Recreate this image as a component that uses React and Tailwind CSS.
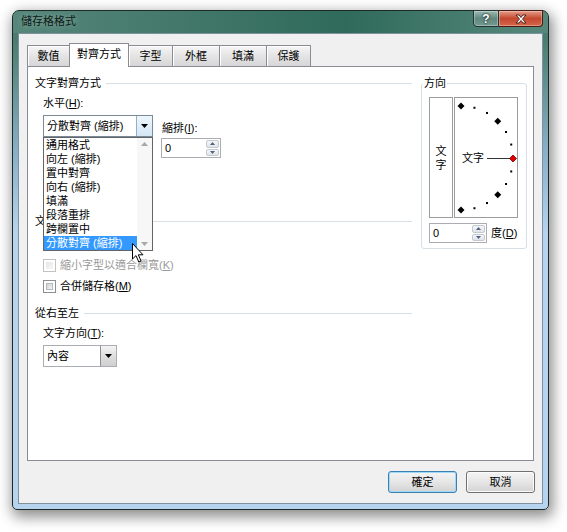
import React from "react";

const U = ({ children }) => (
  <span className="underline underline-offset-[1px]">{children}</span>
);

function DownArrow() {
  return (
    <svg width="7" height="4" viewBox="0 0 7 4">
      <path d="M0 0H7L3.5 4Z" fill="#000" />
    </svg>
  );
}

function SpinButtons() {
  return (
    <div className="w-[15px] flex flex-col gap-[1px] p-[1px] bg-white">
      <div className="flex-1 flex items-center justify-center rounded-[2px] border border-[#c3c9d1] bg-linear-to-b from-[#f6f6f6] to-[#e2e4e8]">
        <svg width="5" height="3" viewBox="0 0 5 3">
          <path d="M0 3H5L2.5 0Z" fill="#4d6185" />
        </svg>
      </div>
      <div className="flex-1 flex items-center justify-center rounded-[2px] border border-[#c3c9d1] bg-linear-to-b from-[#f6f6f6] to-[#e2e4e8]">
        <svg width="5" height="3" viewBox="0 0 5 3">
          <path d="M0 0H5L2.5 3Z" fill="#4d6185" />
        </svg>
      </div>
    </div>
  );
}

function GroupHeader({ title }) {
  return (
    <div className="flex items-center gap-[5px] h-[14px]">
      <span className="leading-[14px] whitespace-nowrap">{title}</span>
      <div className="flex-1 h-px bg-[#d5dfe5]" />
    </div>
  );
}

function Checkbox({ disabled }) {
  return (
    <div
      className={
        disabled
          ? "w-[13px] h-[13px] border border-[#c2c2c2] bg-white p-[2px]"
          : "w-[13px] h-[13px] border border-[#8e8f8f] bg-white p-[2px]"
      }
    >
      <div
        className={
          disabled
            ? "w-full h-full bg-linear-to-br from-[#e6e6e6] to-[#f8f8f8]"
            : "w-full h-full border border-[#b5b8bd] bg-linear-to-br from-[#cfd2d6] to-[#f4f4f4]"
        }
      />
    </div>
  );
}

const listItems = [
  "通用格式",
  "向左 (縮排)",
  "置中對齊",
  "向右 (縮排)",
  "填滿",
  "段落重排",
  "跨欄置中",
  "分散對齊 (縮排)",
];

function Dial() {
  const cx = 6;
  const cy = 60;
  const r = 52;
  const pt = (deg) => {
    const a = (deg * Math.PI) / 180;
    return [cx + r * Math.cos(a), cy - r * Math.sin(a)];
  };
  const diamonds = [90, 45, -45, -90];
  const dots = [75, 60, 30, 15, -15, -30, -60, -75];
  const dpath = ([x, y], s) =>
    `M${x} ${y - s}L${x + s} ${y}L${x} ${y + s}L${x - s} ${y}Z`;
  return (
    <svg width="62" height="119" viewBox="0 0 62 119">
      {dots.map((d) => {
        const [x, y] = pt(d);
        return <rect key={d} x={x - 1} y={y - 1} width="2" height="2" fill="#000" />;
      })}
      {diamonds.map((d) => (
        <path key={d} d={dpath(pt(d), 3.5)} fill="#000" />
      ))}
      <text
        x="7"
        y="64"
        fontSize="11"
        fontFamily="'Noto Sans CJK TC', sans-serif"
        fill="#000"
      >
        文字
      </text>
      <line x1="32" y1="60.5" x2="55" y2="60.5" stroke="#333" strokeWidth="1" />
      <path d={dpath([58, 60.5], 3.5)} fill="#e00000" stroke="#700" strokeWidth="0.8" />
    </svg>
  );
}

const tabBase =
  "h-[21px] flex items-center justify-center border-t border-[#898c95] bg-linear-to-b from-[#f6f6f6] via-[#e4e4e4] to-[#d6d6d6] shadow-[inset_1px_1px_0_#ffffff]";

export default function App() {
  return (
    <div className="relative w-[567px] h-[532px] bg-white overflow-hidden pt-[10px] pl-[12px] text-[11px] leading-[14px] text-black font-['Liberation_Sans','Noto_Sans_CJK_TC',sans-serif]">
      {/* window */}
      <div className="w-[537px] h-[500px] flex flex-col rounded-t-[7px] rounded-b-[5px] border border-[#1c2a28] bg-linear-to-b from-[#4a7d6f] from-[6%] via-[#88afc8] via-[28%] to-[#b7d4ef] to-[45%] shadow-[2px_5px_14px_2px_rgba(0,0,0,0.45)]">
        {/* title bar */}
        <div className="h-[22px] flex items-start rounded-t-[6px] bg-linear-to-r from-[#56877a] via-[#2f6a5a] via-[62%] to-[#56897c]">
          <div className="pl-[8px] pt-[3px] flex-1 text-[#0d1a17] [text-shadow:0_0_6px_rgba(255,255,255,0.4)]">
            儲存格格式
          </div>
          <div className="flex -mt-[1px] mr-[5px]">
            <div className="w-[26px] h-[17px] flex items-center justify-center rounded-bl-[4px] border border-[#223432] bg-linear-to-b from-[#9dbab2] via-[#62887e] to-[#729a8f] shadow-[inset_0_0_0_1px_rgba(255,255,255,0.3)]">
              <span className="text-white font-bold text-[12px] leading-[12px] [text-shadow:0_0_2px_#1c2c2c,0_0_2px_#1c2c2c]">
                ?
              </span>
            </div>
            <div className="w-[44px] h-[17px] flex items-center justify-center rounded-br-[4px] border border-l-0 border-[#4a1a12] bg-linear-to-b from-[#e49c89] via-[#c4472e] to-[#d4674a] shadow-[inset_0_0_0_1px_rgba(255,255,255,0.3)]">
              <svg width="12" height="10" viewBox="0 0 12 10">
                <path
                  d="M1 1L4 1L6 3.5L8 1L11 1L7.5 5L11 9L8 9L6 6.5L4 9L1 9L4.5 5Z"
                  fill="#fff"
                  stroke="#3a1a14"
                  strokeWidth="0.9"
                  strokeLinejoin="round"
                />
              </svg>
            </div>
          </div>
        </div>

        {/* frame + client */}
        <div className="flex-1 px-[5px] pb-[5px] flex">
          <div className="flex-1 border border-[#7f919d] bg-[#f0f0f0] flex flex-col pt-[9px] pl-[8px] pr-[7px] pb-[10px]">
            {/* tabs */}
            <div className="flex items-end h-[23px]">
              <div className={tabBase + " w-[42px] border-l"}>數值</div>
              <div className="relative z-10 w-[60px] h-[24px] -mb-[1px] flex items-start justify-center pt-[3px] border-t border-l border-r border-[#898c95] bg-white">
                對齊方式
              </div>
              <div className={tabBase + " w-[43px]"}>字型</div>
              <div className={tabBase + " w-[47px] border-l"}>外框</div>
              <div className={tabBase + " w-[47px] border-l"}>填滿</div>
              <div className={tabBase + " w-[45px] border-l border-r"}>保護</div>
            </div>

            {/* panel */}
            <div className="w-[507px] h-[395px] border border-[#898c95] bg-white flex pl-[7px]">
              {/* left column */}
              <div className="w-[377px] flex flex-col">
                <div className="mt-[9px]">
                  <GroupHeader title="文字對齊方式" />
                </div>
                <div className="mt-[6px] pl-[8px] h-[14px]">
                  水平(<U>H</U>):
                </div>
                <div className="mt-[5px] pl-[8px] flex gap-[8px]">
                  {/* open combo */}
                  <div className="relative z-20 w-[110px] h-[22px] border border-[#7a8a99] bg-white flex">
                    <div className="flex-1 pl-[3px] leading-[20px] whitespace-nowrap">
                      分散對齊 (縮排)
                    </div>
                    <div className="w-[16px] flex items-center justify-center border-l border-[#8eb0c9] bg-linear-to-b from-[#eef6fb] to-[#d3e7f5]">
                      <DownArrow />
                    </div>
                    {/* dropdown list */}
                    <div className="absolute left-[-1px] top-[21px] w-[110px] h-[114px] border border-[#646464] bg-white flex">
                      <div className="flex-1 flex flex-col">
                        {listItems.map((t, i) =>
                          i === listItems.length - 1 ? (
                            <div
                              key={t}
                              className="h-[14px] pl-[2px] whitespace-nowrap bg-[#3399ff] text-white"
                            >
                              {t}
                            </div>
                          ) : (
                            <div key={t} className="h-[14px] pl-[2px] whitespace-nowrap">
                              {t}
                            </div>
                          )
                        )}
                      </div>
                      <div className="w-[15px] flex flex-col justify-between items-center py-[4px] bg-[#f7f7f7]">
                        <svg width="7" height="4" viewBox="0 0 7 4">
                          <path d="M0 4H7L3.5 0Z" fill="#a8a8a8" />
                        </svg>
                        <svg width="7" height="4" viewBox="0 0 7 4">
                          <path d="M0 0H7L3.5 4Z" fill="#a8a8a8" />
                        </svg>
                      </div>
                    </div>
                  </div>
                  {/* indent */}
                  <div className="flex flex-col pt-[6px]">
                    <div className="h-[14px] pl-[1px]">
                      縮排(<U>I</U>):
                    </div>
                    <div className="mt-[3px] w-[60px] h-[20px] border border-[#abadb3] bg-white flex">
                      <div className="flex-1 pl-[3px] leading-[18px]">0</div>
                      <SpinButtons />
                    </div>
                  </div>
                </div>

                {/* text control header: only its first glyph shows beside the open list */}
                <div className="mt-[56px]">
                  <GroupHeader title="文" />
                </div>
                <div className="mt-[30px] pl-[8px] h-[14px] flex items-center gap-[4px] text-[#9a9a9a]">
                  <Checkbox disabled />
                  <span>
                    縮小字型以適合欄寬(<U>K</U>)
                  </span>
                </div>
                <div className="mt-[7px] pl-[8px] h-[14px] flex items-center gap-[4px]">
                  <Checkbox />
                  <span>
                    合併儲存格(<U>M</U>)
                  </span>
                </div>

                <div className="mt-[13px]">
                  <GroupHeader title="從右至左" />
                </div>
                <div className="mt-[6px] pl-[8px] h-[14px]">
                  文字方向(<U>T</U>):
                </div>
                <div className="mt-[5px] ml-[8px] w-[74px] h-[22px] border border-[#abadb3] bg-white flex">
                  <div className="flex-1 pl-[3px] leading-[20px]">內容</div>
                  <div className="w-[16px] flex items-center justify-center border-l border-[#8e8f8f] bg-linear-to-b from-[#f4f4f4] via-[#dedede] to-[#cfcfcf]">
                    <DownArrow />
                  </div>
                </div>
              </div>

              {/* right column: orientation */}
              <fieldset className="ml-[9px] mt-[9px] w-[106px] h-[173px] border border-[#d5dfe5] rounded-[3px] pl-[1px]">
                <legend className="px-[1px] leading-[14px]">方向</legend>
                <div className="ml-[6px] mt-[7px] flex gap-[1px]">
                  <div className="w-[24px] h-[121px] border border-[#9c9c9c] flex flex-col items-center justify-center">
                    <span>文</span>
                    <span>字</span>
                  </div>
                  <div className="w-[64px] h-[121px] border border-[#9c9c9c]">
                    <Dial />
                  </div>
                </div>
                <div className="ml-[6px] mt-[5px] flex items-center gap-[4px]">
                  <div className="w-[58px] h-[20px] border border-[#abadb3] bg-white flex">
                    <div className="flex-1 pl-[3px] leading-[18px]">0</div>
                    <SpinButtons />
                  </div>
                  <span>
                    度(<U>D</U>)
                  </span>
                </div>
              </fieldset>
            </div>

            {/* buttons */}
            <div className="mt-[10px] flex justify-end gap-[9px]">
              <div className="w-[69px] h-[22px] flex items-center justify-center rounded-[3px] border border-[#3c7fb1] bg-linear-to-b from-[#f4f4f4] via-[#e6e6e6] to-[#d3d3d3] shadow-[inset_0_0_0_1px_#9fd9f7]">
                確定
              </div>
              <div className="w-[69px] h-[22px] flex items-center justify-center rounded-[3px] border border-[#707070] bg-linear-to-b from-[#f4f4f4] via-[#e6e6e6] to-[#d3d3d3] shadow-[inset_0_0_0_1px_#fcfcfc]">
                取消
              </div>
            </div>
          </div>
        </div>
      </div>

      {/* mouse cursor */}
      <svg
        className="absolute left-[132px] top-[243px] z-30"
        width="13"
        height="21"
        viewBox="0 0 13 21"
      >
        <path
          d="M0.5 0.5L0.5 16L4 12.6L6.8 19L9 18L6.3 11.8L11 11.8Z"
          fill="#fff"
          stroke="#000"
          strokeWidth="1"
          strokeLinejoin="round"
        />
      </svg>
    </div>
  );
}
